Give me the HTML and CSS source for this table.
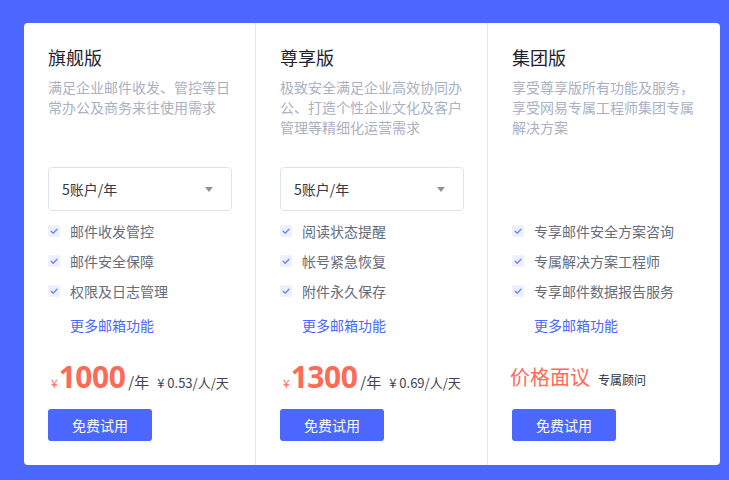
FILE: index.html
```html
<!DOCTYPE html>
<html lang="zh-CN">
<head>
<meta charset="utf-8">
<link rel="stylesheet" href="styles.css">
</head>
<body>
<div class="card">
  <div class="plan">
    <h2 class="title">旗舰版</h2>
    <p class="desc">满足企业邮件收发、管控等日常办公及商务来往使用需求</p>
    <div class="select"><span>5账户/年</span><i class="caret"></i></div>
    <ul class="features">
      <li><span class="check"><svg viewBox="0 0 12 12"><path d="M3.2 6.2l2 2 3.8-4" fill="none" stroke="#6d84f6" stroke-width="1.3" stroke-linecap="round" stroke-linejoin="round"/></svg></span>邮件收发管控</li>
      <li><span class="check"><svg viewBox="0 0 12 12"><path d="M3.2 6.2l2 2 3.8-4" fill="none" stroke="#6d84f6" stroke-width="1.3" stroke-linecap="round" stroke-linejoin="round"/></svg></span>邮件安全保障</li>
      <li><span class="check"><svg viewBox="0 0 12 12"><path d="M3.2 6.2l2 2 3.8-4" fill="none" stroke="#6d84f6" stroke-width="1.3" stroke-linecap="round" stroke-linejoin="round"/></svg></span>权限及日志管理</li>
    </ul>
    <a class="more">更多邮箱功能</a>
    <div class="price"><span class="yen">¥</span><span class="num">1000</span><span class="unit">/年</span><span class="per">¥ 0.53/人/天</span></div>
    <button class="btn">免费试用</button>
  </div>
  <div class="plan">
    <h2 class="title">尊享版</h2>
    <p class="desc">极致安全满足企业高效协同办公、打造个性企业文化及客户管理等精细化运营需求</p>
    <div class="select"><span>5账户/年</span><i class="caret"></i></div>
    <ul class="features">
      <li><span class="check"><svg viewBox="0 0 12 12"><path d="M3.2 6.2l2 2 3.8-4" fill="none" stroke="#6d84f6" stroke-width="1.3" stroke-linecap="round" stroke-linejoin="round"/></svg></span>阅读状态提醒</li>
      <li><span class="check"><svg viewBox="0 0 12 12"><path d="M3.2 6.2l2 2 3.8-4" fill="none" stroke="#6d84f6" stroke-width="1.3" stroke-linecap="round" stroke-linejoin="round"/></svg></span>帐号紧急恢复</li>
      <li><span class="check"><svg viewBox="0 0 12 12"><path d="M3.2 6.2l2 2 3.8-4" fill="none" stroke="#6d84f6" stroke-width="1.3" stroke-linecap="round" stroke-linejoin="round"/></svg></span>附件永久保存</li>
    </ul>
    <a class="more">更多邮箱功能</a>
    <div class="price"><span class="yen">¥</span><span class="num">1300</span><span class="unit">/年</span><span class="per">¥ 0.69/人/天</span></div>
    <button class="btn">免费试用</button>
  </div>
  <div class="plan">
    <h2 class="title">集团版</h2>
    <p class="desc">享受尊享版所有功能及服务，享受网易专属工程师集团专属解决方案</p>
    <div class="select-spacer"></div>
    <ul class="features">
      <li><span class="check"><svg viewBox="0 0 12 12"><path d="M3.2 6.2l2 2 3.8-4" fill="none" stroke="#6d84f6" stroke-width="1.3" stroke-linecap="round" stroke-linejoin="round"/></svg></span>专享邮件安全方案咨询</li>
      <li><span class="check"><svg viewBox="0 0 12 12"><path d="M3.2 6.2l2 2 3.8-4" fill="none" stroke="#6d84f6" stroke-width="1.3" stroke-linecap="round" stroke-linejoin="round"/></svg></span>专属解决方案工程师</li>
      <li><span class="check"><svg viewBox="0 0 12 12"><path d="M3.2 6.2l2 2 3.8-4" fill="none" stroke="#6d84f6" stroke-width="1.3" stroke-linecap="round" stroke-linejoin="round"/></svg></span>专享邮件数据报告服务</li>
    </ul>
    <a class="more">更多邮箱功能</a>
    <div class="price price-talk"><span class="talk">价格面议</span><span class="advisor">专属顾问</span></div>
    <button class="btn">免费试用</button>
  </div>
</div>
</body>
</html>
```

FILE: styles.css
```css
* { box-sizing: border-box; }
html, body { margin: 0; }
body {
  background: #4b67ff;
  padding: 23px 9px 15px 24px;
  font-family: "Noto Sans CJK SC", "Noto Sans", sans-serif;
  width: 729px;
  height: 480px;
  overflow: hidden;
}
.card {
  background: #fff;
  border-radius: 4px;
  display: grid;
  grid-template-columns: repeat(3, 232px);
  height: 442px;
}
.plan {
  padding: 21px 24px 0 24px;
  border-right: 1px solid #e4e7ee;
  display: flex;
  flex-direction: column;
  align-items: flex-start;
}
.plan:last-child { border-right: none; }
.title {
  margin: 0;
  font-size: 18px;
  line-height: 26px;
  font-weight: 400;
  color: #1e2230;
}
.desc {
  margin: 7px 0 0;
  font-size: 14px;
  line-height: 20px;
  color: #a9b1c3;
  height: 60px;
  width: 184px;
}
.select {
  margin-top: 30px;
  width: 184px;
  height: 44px;
  border: 1px solid #dfe3ea;
  border-radius: 4px;
  display: flex;
  align-items: center;
  justify-content: space-between;
  padding: 0 18px 0 13px;
  font-size: 14px;
  color: #333a47;
}
.select-spacer { margin-top: 30px; height: 44px; }
.caret {
  width: 0; height: 0;
  border-left: 4px solid transparent;
  border-right: 4px solid transparent;
  border-top: 5px solid #8a93a3;
}
.features {
  list-style: none;
  margin: 5px 0 0;
  padding: 0;
}
.features li {
  display: flex;
  align-items: center;
  height: 30px;
  font-size: 14px;
  color: #656c7a;
}
.check {
  width: 12px;
  height: 12px;
  background: #edf0ff;
  border-radius: 2px;
  margin-right: 10px;
  display: flex;
}
.check svg { width: 12px; height: 12px; }
.more {
  margin: 4px 0 0 22px;
  font-size: 14px;
  line-height: 30px;
  color: #4b67ff;
  cursor: pointer;
}
.price {
  margin-top: 17px;
  height: 40px;
  display: flex;
  align-items: baseline;
  padding-left: 3px;
  white-space: nowrap;
}
.yen { font-size: 12px; color: #fd6b57; margin-right: 1px; }
.num {
  font-family: "Noto Sans", "Open Sans", sans-serif;
  font-weight: 700;
  font-size: 30px;
  line-height: 40px;
  color: #fd6b57;
  letter-spacing: -0.5px;
}
.unit { font-size: 15px; color: #3d4352; margin-left: 3px; }
.per { font-size: 13px; color: #3d4352; margin-left: 8px; }
.price-talk { padding-left: 0; margin-left: -2px; }
.talk { font-size: 20px; line-height: 40px; color: #fd6b57; }
.advisor { font-size: 12px; color: #2c3140; margin-left: 8px; }
.btn {
  margin-top: 12px;
  width: 104px;
  height: 32px;
  border: none;
  border-radius: 3px;
  background: #4b67ff;
  color: #fff;
  font-family: "Noto Sans CJK SC", sans-serif;
  font-size: 14px;
  cursor: pointer;
}
```
